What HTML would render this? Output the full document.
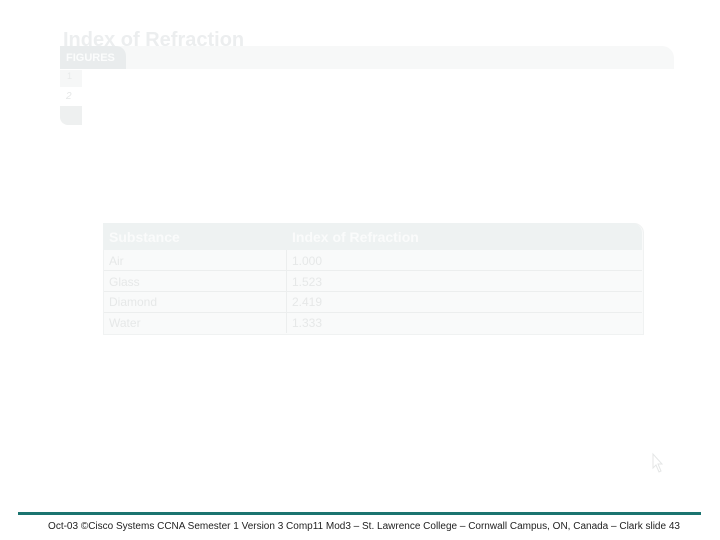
<!DOCTYPE html>
<html><head><meta charset="utf-8"><style>
body{margin:0;width:720px;height:540px;background:#fff;position:relative;overflow:hidden;font-family:"Liberation Sans",sans-serif}
.a{position:absolute}
</style></head><body>
<div class="a" style="left:63px;top:29px;font-size:20px;font-weight:bold;color:#eceeef">Index of Refraction</div>
<div class="a" style="left:60px;top:46px;width:614px;height:23px;background:#f7f8f8;border-radius:0 12px 0 0"></div>
<div class="a" style="left:60px;top:46px;width:66px;height:23px;background:#e9eced;border-radius:0 10px 0 0"></div>
<div class="a" style="left:66px;top:52px;font-size:11px;font-weight:bold;color:#fbfcfc">FIGURES</div>
<div class="a" style="left:60px;top:70px;width:22px;height:17px;background:#f6f7f7"></div>
<div class="a" style="left:67px;top:71px;font-size:9px;color:#e8eaea">1</div>
<div class="a" style="left:66px;top:91px;font-size:10px;color:#e5e7e7;font-style:italic">2</div>
<div class="a" style="left:60px;top:106px;width:22px;height:19px;background:#eef0f0;border-radius:0 0 0 8px"></div>
<div class="a" style="left:103px;top:223px;width:539px;height:110px;background:#f9fafa;border:1px solid #f0f2f2;border-radius:0 10px 0 0"></div>
<div class="a" style="left:103px;top:223px;width:539px;height:27px;background:#eef2f2;border-radius:0 10px 0 0"></div>
<div class="a" style="left:109px;top:229px;font-size:14px;font-weight:bold;color:#fafbfb">Substance</div>
<div class="a" style="left:292px;top:229px;font-size:14px;font-weight:bold;color:#fafbfb">Index of Refraction</div>
<div class="a" style="left:286px;top:250px;width:1px;height:83px;background:#eceeee"></div>
<div class="a" style="left:104px;top:270px;width:538px;height:1px;background:#eceeee"></div>
<div class="a" style="left:104px;top:291px;width:538px;height:1px;background:#eceeee"></div>
<div class="a" style="left:104px;top:312px;width:538px;height:1px;background:#eceeee"></div>
<div class="a" style="left:109px;top:251px;font-size:12px;color:#e6e8e8;line-height:20.7px">Air<br>Glass<br>Diamond<br>Water</div>
<div class="a" style="left:292px;top:251px;font-size:12px;color:#e6e8e8;line-height:20.7px">1.000<br>1.523<br>2.419<br>1.333</div>
<svg class="a" style="left:650px;top:452px" width="16" height="24"><path d="M3 2 L3 16 L6 13 L9 20 L11 19 L8 12 L12 12 Z" fill="none" stroke="#e4e6e6" stroke-width="1"/></svg>
<div class="a" style="left:18px;top:512px;width:683px;height:3px;background:#1b7470"></div>
<div class="a" style="left:0;top:521px;width:720px;text-align:center;font-size:10px;color:#222;padding-left:4px">Oct-03 ©Cisco Systems CCNA Semester 1 Version 3 Comp11 Mod3 – St. Lawrence College – Cornwall Campus, ON, Canada – Clark slide 43</div>
</body></html>
